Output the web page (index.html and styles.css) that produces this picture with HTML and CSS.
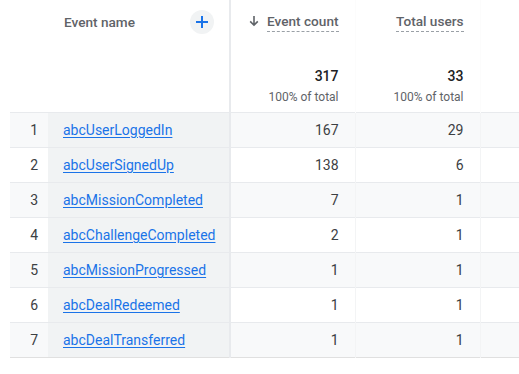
FILE: index.html
```html
<!DOCTYPE html>
<html>
<head>
<meta charset="utf-8">
<link rel="stylesheet" href="styles.css">
</head>
<body>
<table class="report">
  <colgroup>
    <col class="c-rank"><col class="c-name"><col class="c-num"><col class="c-num"><col class="c-rest">
  </colgroup>
  <thead>
    <tr class="titles">
      <th colspan="2" class="name-head">
        <div class="name-head-inner">
          <span class="title">Event name</span>
          <span class="add-btn"><svg width="14" height="14" viewBox="0 0 14 14"><path d="M7 1v12M1 7h12" stroke="#1a73e8" stroke-width="2"/></svg></span>
        </div>
      </th>
      <th class="num-head"><span class="sort-arrow"><svg width="10" height="12" viewBox="0 0 10 12"><path d="M5 1v9M1.2 6.4L5 10.2l3.8-3.8" fill="none" stroke="#5f6368" stroke-width="1.6"/></svg></span><span class="dashed">Event count</span></th>
      <th class="num-head"><span class="dashed">Total users</span></th>
      <th class="rest"></th>
    </tr>
    <tr class="totals">
      <th colspan="2" class="name-head"></th>
      <th class="total"><div class="big">317</div><div class="pct">100% of total</div></th>
      <th class="total"><div class="big">33</div><div class="pct">100% of total</div></th>
      <th class="rest"></th>
    </tr>
  </thead>
  <tbody>
    <tr class="odd"><td class="rank">1</td><td class="name"><a href="#">abcUserLoggedIn</a></td><td class="num">167</td><td class="num">29</td><td class="rest"></td></tr>
    <tr><td class="rank">2</td><td class="name"><a href="#">abcUserSignedUp</a></td><td class="num">138</td><td class="num">6</td><td class="rest"></td></tr>
    <tr class="odd"><td class="rank">3</td><td class="name"><a href="#">abcMissionCompleted</a></td><td class="num">7</td><td class="num">1</td><td class="rest"></td></tr>
    <tr><td class="rank">4</td><td class="name"><a href="#">abcChallengeCompleted</a></td><td class="num">2</td><td class="num">1</td><td class="rest"></td></tr>
    <tr class="odd"><td class="rank">5</td><td class="name"><a href="#">abcMissionProgressed</a></td><td class="num">1</td><td class="num">1</td><td class="rest"></td></tr>
    <tr><td class="rank">6</td><td class="name"><a href="#">abcDealRedeemed</a></td><td class="num">1</td><td class="num">1</td><td class="rest"></td></tr>
    <tr class="odd"><td class="rank">7</td><td class="name"><a href="#">abcDealTransferred</a></td><td class="num">1</td><td class="num">1</td><td class="rest"></td></tr>
  </tbody>
</table>
</body>
</html>
```
FILE: styles.css
```css
html, body {
  margin: 0;
  padding: 0;
  background: #fff;
  overflow: hidden;
}
body {
  font-family: Roboto, "Liberation Sans", Arial, sans-serif;
  color: #202124;
  padding-left: 10px;
}
.report {
  border-collapse: collapse;
  table-layout: fixed;
  width: 509px;
  font-size: 14px;
}
.c-rank { width: 38px; }
.c-name { width: 182px; }
.c-num { width: 125px; }
.c-rest { width: 39px; }

th, td { padding: 0; font-weight: normal; }

.titles th { height: 44px; vertical-align: middle; }
.name-head {
  border-right: 2px solid #e8eaed;
}
.name-head-inner {
  display: flex;
  align-items: center;
  justify-content: space-between;
  padding-left: 54px;
  padding-right: 15px;
}
.title {
  color: #5f6368;
  font-weight: 500;
  font-size: 13.6px;
}
.add-btn {
  width: 24px;
  height: 24px;
  border-radius: 50%;
  background: #f1f3f4;
  display: flex;
  align-items: center;
  justify-content: center;
}
.num-head {
  text-align: right;
  padding-right: 16px;
  color: #5f6368;
  font-weight: 500;
  font-size: 13.6px;
  white-space: nowrap;
}
.num-head + .num-head, .titles .rest, .totals .total + .total, .totals .rest {
  border-left: 1px solid #fcfcfc;
}
.sort-arrow {
  display: inline-block;
  margin-right: 8px;
  vertical-align: -1px;
}
.dashed {
  display: inline-block;
  border-bottom: 1px dashed #9aa0a6;
  line-height: 18px;
  padding-bottom: 1px;
}
.totals th {
  height: 68px;
  vertical-align: top;
}
.total {
  text-align: right;
  padding-right: 16px;
}
.big {
  font-weight: 500;
  font-size: 14px;
  color: #202124;
  margin-top: 24px;
  line-height: 17px;
}
.pct {
  font-size: 12px;
  color: #5f6368;
  margin-top: 5px;
  line-height: 14px;
}
tbody tr {
  height: 35px;
  border-top: 1px solid #e8eaed;
}
tbody tr:last-child { border-bottom: 1px solid #e0e0e0; }
tbody tr.odd { background: #f8f9fa; }
tbody td { vertical-align: middle; }
.rank {
  text-align: right;
  padding-right: 10px;
  color: #3c4043;
}
.name {
  background: #f1f3f4;
  border-right: 2px solid #e8eaed;
  padding-left: 15px;
}
.name a {
  color: #1a73e8;
  text-decoration: underline;
  text-underline-offset: 2px;
}
.num {
  text-align: right;
  padding-right: 16px;
  color: #3c4043;
}
.num + .num, tbody .rest { border-left: 1px solid #f3f4f5; }
```
